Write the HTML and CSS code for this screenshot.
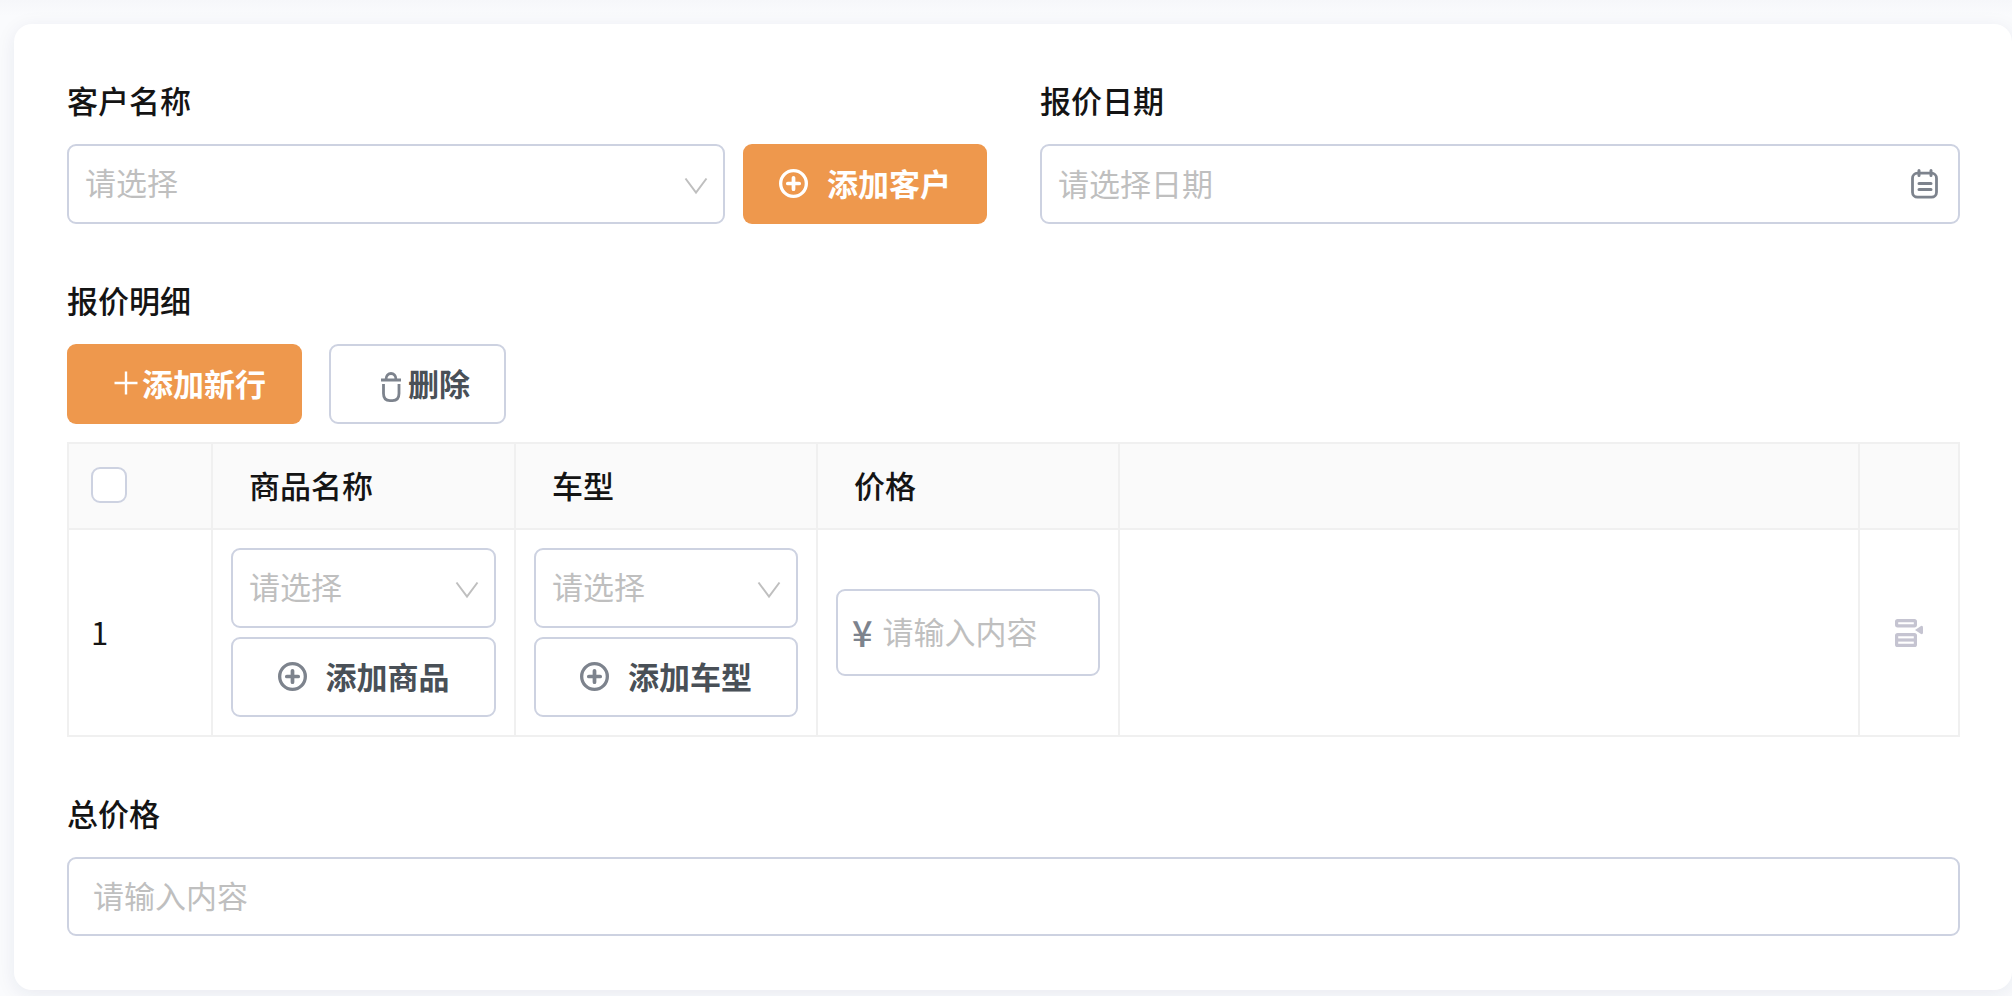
FILE: index.html
```html
<!DOCTYPE html>
<html lang="zh-CN">
<head>
<meta charset="utf-8">
<title>报价单</title>
<link rel="stylesheet" href="styles.css">
</head>
<body>
<svg class="sprite" aria-hidden="true">
  <symbol id="chevron" viewBox="0 0 24 18"><path d="M1.5 1.5 12 15.5 22.5 1.5" fill="none" stroke="currentColor" stroke-width="2"/></symbol>
  <symbol id="circle-plus" viewBox="0 0 28 28"><circle cx="14" cy="14" r="12.4" fill="none" stroke="currentColor" stroke-width="3.2"/><path d="M14 8.500V19.500M8.500 14H19.500" stroke="currentColor" stroke-width="3.600" stroke-linecap="round"/></symbol>
  <symbol id="plus" viewBox="0 0 32 32"><path d="M16 4.500V27.500M4.500 16H27.500" stroke="currentColor" stroke-width="2.400"/></symbol>
  <symbol id="trash" viewBox="0 0 32 40"><path d="M5 17H25M10 16.500C10 8.500 20 8.500 20 16.500M7.500 21V30.500Q7.500 37.600 14 37.600H16.500Q23 37.600 23 30.500V21" fill="none" stroke="currentColor" stroke-width="2.800"/></symbol>
  <symbol id="calendar" viewBox="0 0 28 30"><rect x="1.500" y="4.200" width="24" height="24" rx="5" fill="none" stroke="currentColor" stroke-width="2.800"/><path d="M8 1.500V6.500M20 1.500V6.500M8 14.500H20M8 20.500H20" stroke="currentColor" stroke-width="3" stroke-linecap="round"/></symbol>
  <symbol id="row-menu" viewBox="0 0 28 28"><g fill="none" stroke="currentColor" stroke-width="3.200"><rect x="1.600" y="1.600" width="18.800" height="5.200" rx="1"/><rect x="1.600" y="15.600" width="18.800" height="10.800" rx="1"/><path d="M2 21H20"/></g><path d="M20 11 26 7Q28 6.400 28 8.500V13.500Q28 15.600 26 15Z" fill="currentColor"/></symbol>
</svg>
<main class="page">
  <form class="card">
    <div class="columns">
      <div class="field">
        <label class="label" for="customer">客户名称</label>
        <div class="inline">
          <div class="picker">
            <select class="control" id="customer"><option>请选择</option></select>
            <svg class="chevron"><use href="#chevron"/></svg>
          </div>
          <button class="button primary" type="button"><svg class="circle-icon"><use href="#circle-plus"/></svg>添加客户</button>
        </div>
      </div>
      <div class="field">
        <label class="label" for="date">报价日期</label>
        <div class="picker">
          <input class="control" id="date" type="text" placeholder="请选择日期">
          <svg class="calendar"><use href="#calendar"/></svg>
        </div>
      </div>
    </div>

    <section class="field">
      <h2 class="label">报价明细</h2>
      <div class="toolbar">
        <button class="button primary add-row" type="button"><svg class="plus-icon"><use href="#plus"/></svg>添加新行</button>
        <button class="button outline remove" type="button"><svg class="trash-icon"><use href="#trash"/></svg>删除</button>
      </div>
      <table class="details">
        <colgroup>
          <col class="col-index"><col class="col-product"><col class="col-data"><col class="col-data"><col><col class="col-action">
        </colgroup>
        <thead>
          <tr>
            <th class="index"><input class="check" type="checkbox" aria-label="全选"></th>
            <th>商品名称</th>
            <th>车型</th>
            <th>价格</th>
            <th></th>
            <th></th>
          </tr>
        </thead>
        <tbody>
          <tr>
            <td class="index">1</td>
            <td>
              <div class="stack">
                <div class="picker">
                  <select class="control" aria-label="商品名称"><option>请选择</option></select>
                  <svg class="chevron"><use href="#chevron"/></svg>
                </div>
                <button class="button outline" type="button"><svg class="circle-icon"><use href="#circle-plus"/></svg>添加商品</button>
              </div>
            </td>
            <td>
              <div class="stack">
                <div class="picker">
                  <select class="control" aria-label="车型"><option>请选择</option></select>
                  <svg class="chevron"><use href="#chevron"/></svg>
                </div>
                <button class="button outline" type="button"><svg class="circle-icon"><use href="#circle-plus"/></svg>添加车型</button>
              </div>
            </td>
            <td>
              <div class="money">
                <span class="currency">¥</span>
                <input class="amount" type="text" placeholder="请输入内容" aria-label="价格">
              </div>
            </td>
            <td></td>
            <td class="action"><button class="row-menu" type="button" aria-label="行操作"><svg class="menu-icon"><use href="#row-menu"/></svg></button></td>
          </tr>
        </tbody>
      </table>
    </section>

    <div class="field">
      <label class="label" for="total">总价格</label>
      <input class="control total" id="total" type="text" placeholder="请输入内容">
    </div>
  </form>
</main>
</body>
</html>
```
FILE: styles.css
```css
* {
  box-sizing: border-box;
}

body {
  margin: 0;
  background: #fafbfd;
  color: #141414;
  font-family: "Noto Sans CJK SC", sans-serif;
  font-size: 31px;
  line-height: 40px;
}

button,
input,
select {
  margin: 0;
  font: inherit;
}

svg {
  display: block;
  flex: none;
}

.sprite {
  position: absolute;
  width: 0;
  height: 0;
}

.page {
  padding: 24px 0 6px 14px;
  overflow: hidden;
  background: linear-gradient(#f6f7fa, #fafbfd 16px);
}

.card {
  display: flex;
  flex-direction: column;
  gap: 56px;
  padding: 56px 52px 54px 53px;
  border-radius: 18px;
  background: #fff;
  box-shadow: 0 4px 20px rgba(30, 35, 90, 0.08);
}

.columns {
  display: grid;
  grid-template-columns: 1fr 1fr;
  gap: 53px;
}

.label {
  display: block;
  margin: 0 0 24px;
  font-size: 31px;
  font-weight: 500;
}

.inline {
  display: flex;
  gap: 18px;
}

.picker {
  position: relative;
  flex: 1;
}

.control {
  display: block;
  width: 100%;
  height: 80px;
  padding: 0 56px 4px 16px;
  border: 2px solid #cdd2e1;
  border-radius: 9px;
  background: #fff;
  color: #bfbfbf;
  appearance: none;
}

.total {
  height: 79px;
  padding: 0 24px 4px;
}

::placeholder {
  color: #bfbfbf;
  opacity: 1;
}

.chevron {
  position: absolute;
  top: 33px;
  right: 17px;
  width: 24px;
  height: 18px;
  color: #bfbfbf;
  pointer-events: none;
}

.calendar {
  position: absolute;
  top: 25px;
  right: 21px;
  width: 28px;
  height: 30px;
  color: #7d838d;
  pointer-events: none;
}

.button {
  display: flex;
  align-items: center;
  justify-content: center;
  gap: 19px;
  height: 80px;
  padding: 0 36px 2px;
  border: 0;
  border-radius: 9px;
  font-weight: 700;
  white-space: nowrap;
}

.primary {
  background: #ee984d;
  color: #fff;
}

.outline {
  padding: 0 34px 2px;
  border: 2px solid #cdd2e1;
  background: #fff;
  color: #495057;
}

.outline svg {
  color: #7d838d;
}

.circle-icon {
  width: 29px;
  height: 29px;
}

.plus-icon {
  width: 32px;
  height: 32px;
}

.trash-icon {
  width: 32px;
  height: 40px;
}

.toolbar {
  display: flex;
  gap: 27px;
  margin-bottom: 18px;
}

.add-row {
  gap: 0;
  padding-left: 43px;
}

.remove {
  gap: 0;
  padding-left: 45px;
}

.details {
  width: 100%;
  table-layout: fixed;
  border-collapse: collapse;
}

.col-index {
  width: 144px;
}

.col-product {
  width: 303px;
}

.col-data {
  width: 302px;
}

.col-action {
  width: 100px;
}

.details th,
.details td {
  border: 2px solid #f0f0f0;
  text-align: left;
  vertical-align: middle;
}

.details th {
  height: 86px;
  padding: 0 36px 3px;
  background: #fafafa;
  font-weight: 500;
}

.details td {
  padding: 18px;
}

.details .index {
  padding: 0 22px 2px;
}

.details .action {
  padding: 0 35px;
}

.check {
  display: block;
  width: 36px;
  height: 36px;
  border: 2px solid #cdd2e1;
  border-radius: 9px;
  background: #fff;
  appearance: none;
}

.stack {
  display: flex;
  flex-direction: column;
  gap: 9px;
}

.money {
  display: flex;
  align-items: center;
  gap: 10px;
  height: 87px;
  padding: 0 14px 3px;
  border: 2px solid #cdd2e1;
  border-radius: 9px;
}

.currency {
  color: #7d838d;
  font-size: 36px;
  font-weight: 500;
}

.amount {
  flex: 1;
  min-width: 0;
  padding: 0;
  border: 0;
  background: none;
}

.row-menu {
  display: block;
  padding: 0;
  border: 0;
  background: none;
  color: #c5c4d1;
}

.menu-icon {
  width: 28px;
  height: 28px;
}
```
